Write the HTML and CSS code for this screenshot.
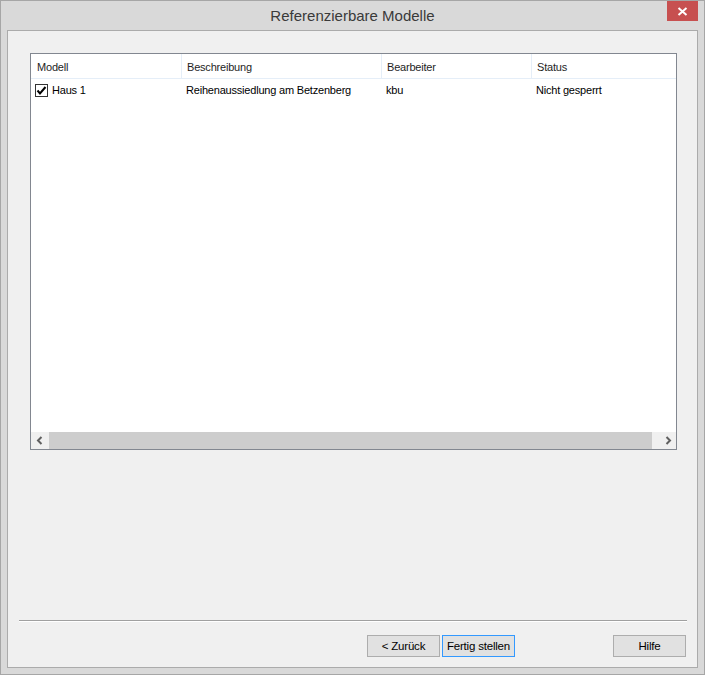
FILE: index.html
```html
<!DOCTYPE html>
<html lang="de">
<head>
<meta charset="utf-8">
<title>Referenzierbare Modelle</title>
<link rel="stylesheet" href="styles.css">
</head>
<body>
<div class="window">
  <div class="titlebar">
    <div class="title-spacer"></div>
    <div class="title">Referenzierbare Modelle</div>
    <div class="title-actions">
      <button class="close" aria-label="Schließen">
        <svg width="11" height="9" viewBox="0 0 11 9"><path d="M1.5 1 L9.5 8 M9.5 1 L1.5 8" stroke="#fff" stroke-width="2" fill="none"/></svg>
      </button>
    </div>
  </div>
  <div class="client">
    <div class="listview">
      <div class="lv-header">
        <div class="col c1">Modell</div>
        <div class="col c2">Beschreibung</div>
        <div class="col c3">Bearbeiter</div>
        <div class="col c4">Status</div>
      </div>
      <div class="lv-body">
        <div class="lv-row">
          <div class="cell c1">
            <span class="checkbox">
              <svg width="11" height="11" viewBox="0 0 11 11"><path d="M1.5 5.5 L4 8.5 L9.5 2" stroke="#000" stroke-width="2" fill="none"/></svg>
            </span>
            <span>Haus 1</span>
          </div>
          <div class="cell c2">Reihenaussiedlung am Betzenberg</div>
          <div class="cell c3">kbu</div>
          <div class="cell c4">Nicht gesperrt</div>
        </div>
      </div>
      <div class="hscroll">
        <div class="sb-arrow">
          <svg width="8" height="9" viewBox="0 0 8 9"><path d="M5.5 1 L2 4.5 L5.5 8" stroke="#606060" stroke-width="2" fill="none"/></svg>
        </div>
        <div class="sb-track"><div class="sb-thumb"></div></div>
        <div class="sb-arrow">
          <svg width="8" height="9" viewBox="0 0 8 9"><path d="M2.5 1 L6 4.5 L2.5 8" stroke="#606060" stroke-width="2" fill="none"/></svg>
        </div>
      </div>
    </div>
    <div class="spacer"></div>
    <div class="separator"></div>
    <div class="buttons">
      <button class="btn">&lt; Zurück</button>
      <button class="btn focused">Fertig stellen</button>
      <div class="btn-gap"></div>
      <button class="btn">Hilfe</button>
    </div>
  </div>
</div>
</body>
</html>
```

FILE: styles.css
```css
html, body {
  margin: 0;
  padding: 0;
}
body {
  width: 705px;
  height: 675px;
  background: #d9d9d9;
  font-family: "Liberation Sans", Arial, sans-serif;
}
.window {
  box-sizing: border-box;
  width: 705px;
  height: 675px;
  border: 1px solid #a6a6a6;
  background: #d9d9d9;
  display: flex;
  flex-direction: column;
  padding: 0 6px 6px 6px;
}
.titlebar {
  height: 29px;
  display: grid;
  grid-template-columns: 1fr auto 1fr;
  margin: 0 -6px;
  padding: 0 6px;
}
.title {
  font-family: "Liberation Sans", Arial, sans-serif;
  font-size: 15px;
  color: #3a3a3a;
  line-height: 29px;
}
.title-actions {
  display: flex;
  justify-content: flex-end;
  align-items: flex-start;
}
.close {
  width: 31px;
  height: 20px;
  border: 0;
  padding: 0;
  background: #c75050;
  display: flex;
  align-items: center;
  justify-content: center;
}
.client {
  flex: 1;
  border: 1px solid #ababab;
  background: #f0f0f0;
  display: flex;
  flex-direction: column;
}
.listview {
  margin: 22px 20px 0 22px;
  height: 397px;
  box-sizing: border-box;
  border: 1px solid #828790;
  background: #fff;
  display: flex;
  flex-direction: column;
  font-size: 11px;
  letter-spacing: -0.2px;
  color: #000;
}
.lv-header {
  display: flex;
  height: 24px;
  border-bottom: 1px solid #e5eef8;
}
.col {
  box-sizing: border-box;
  padding-left: 6px;
  line-height: 26px;
  color: #1e1e1e;
  border-right: 1px solid #e5eef8;
}
.c1 { width: 151px; }
.c2 { width: 200px; }
.c3 { width: 150px; }
.c4 { flex: 1; border-right: 0; }
.col.c1 { padding-left: 6px; }
.col.c2, .col.c3, .col.c4 { padding-left: 5px; }
.lv-body {
  flex: 1;
}
.lv-row {
  display: flex;
  height: 22px;
  align-items: center;
}
.cell {
  box-sizing: border-box;
  white-space: nowrap;
  display: flex;
  align-items: center;
}
.cell.c1 { padding-left: 4px; gap: 4px; }
.cell.c2 { padding-left: 4px; }
.cell.c3 { padding-left: 4px; }
.cell.c4 { padding-left: 4px; }
.checkbox {
  box-sizing: border-box;
  width: 13px;
  height: 13px;
  border: 1px solid #333;
  background: #fff;
  display: flex;
  align-items: center;
  justify-content: center;
}
.hscroll {
  height: 17px;
  display: flex;
  background: #f0f0f0;
}
.sb-arrow {
  width: 17px;
  display: flex;
  align-items: center;
  justify-content: center;
}
.sb-track {
  flex: 1;
  display: flex;
  padding-right: 7px;
}
.sb-thumb {
  flex: 1;
  margin: 0 0 0 1px;
  background: #cdcdcd;
}
.spacer {
  flex: 1;
}
.separator {
  margin: 0 10px 0 11px;
  height: 1px;
  background: #a0a0a0;
  border-bottom: 1px solid #fff;
  box-sizing: content-box;
}
.buttons {
  display: flex;
  margin: 13px 11px 10px 0;
  justify-content: flex-end;
}
.btn-gap {
  width: 98px;
}
.btn {
  box-sizing: border-box;
  width: 73px;
  height: 22px;
  border: 1px solid #adadad;
  background: #e1e1e1;
  font-family: "Liberation Sans", Arial, sans-serif;
  font-size: 11.5px;
  letter-spacing: -0.2px;
  color: #000;
  padding: 0;
}
.btn.focused {
  margin-left: 2px;
  border-color: #3399ff;
}
```
